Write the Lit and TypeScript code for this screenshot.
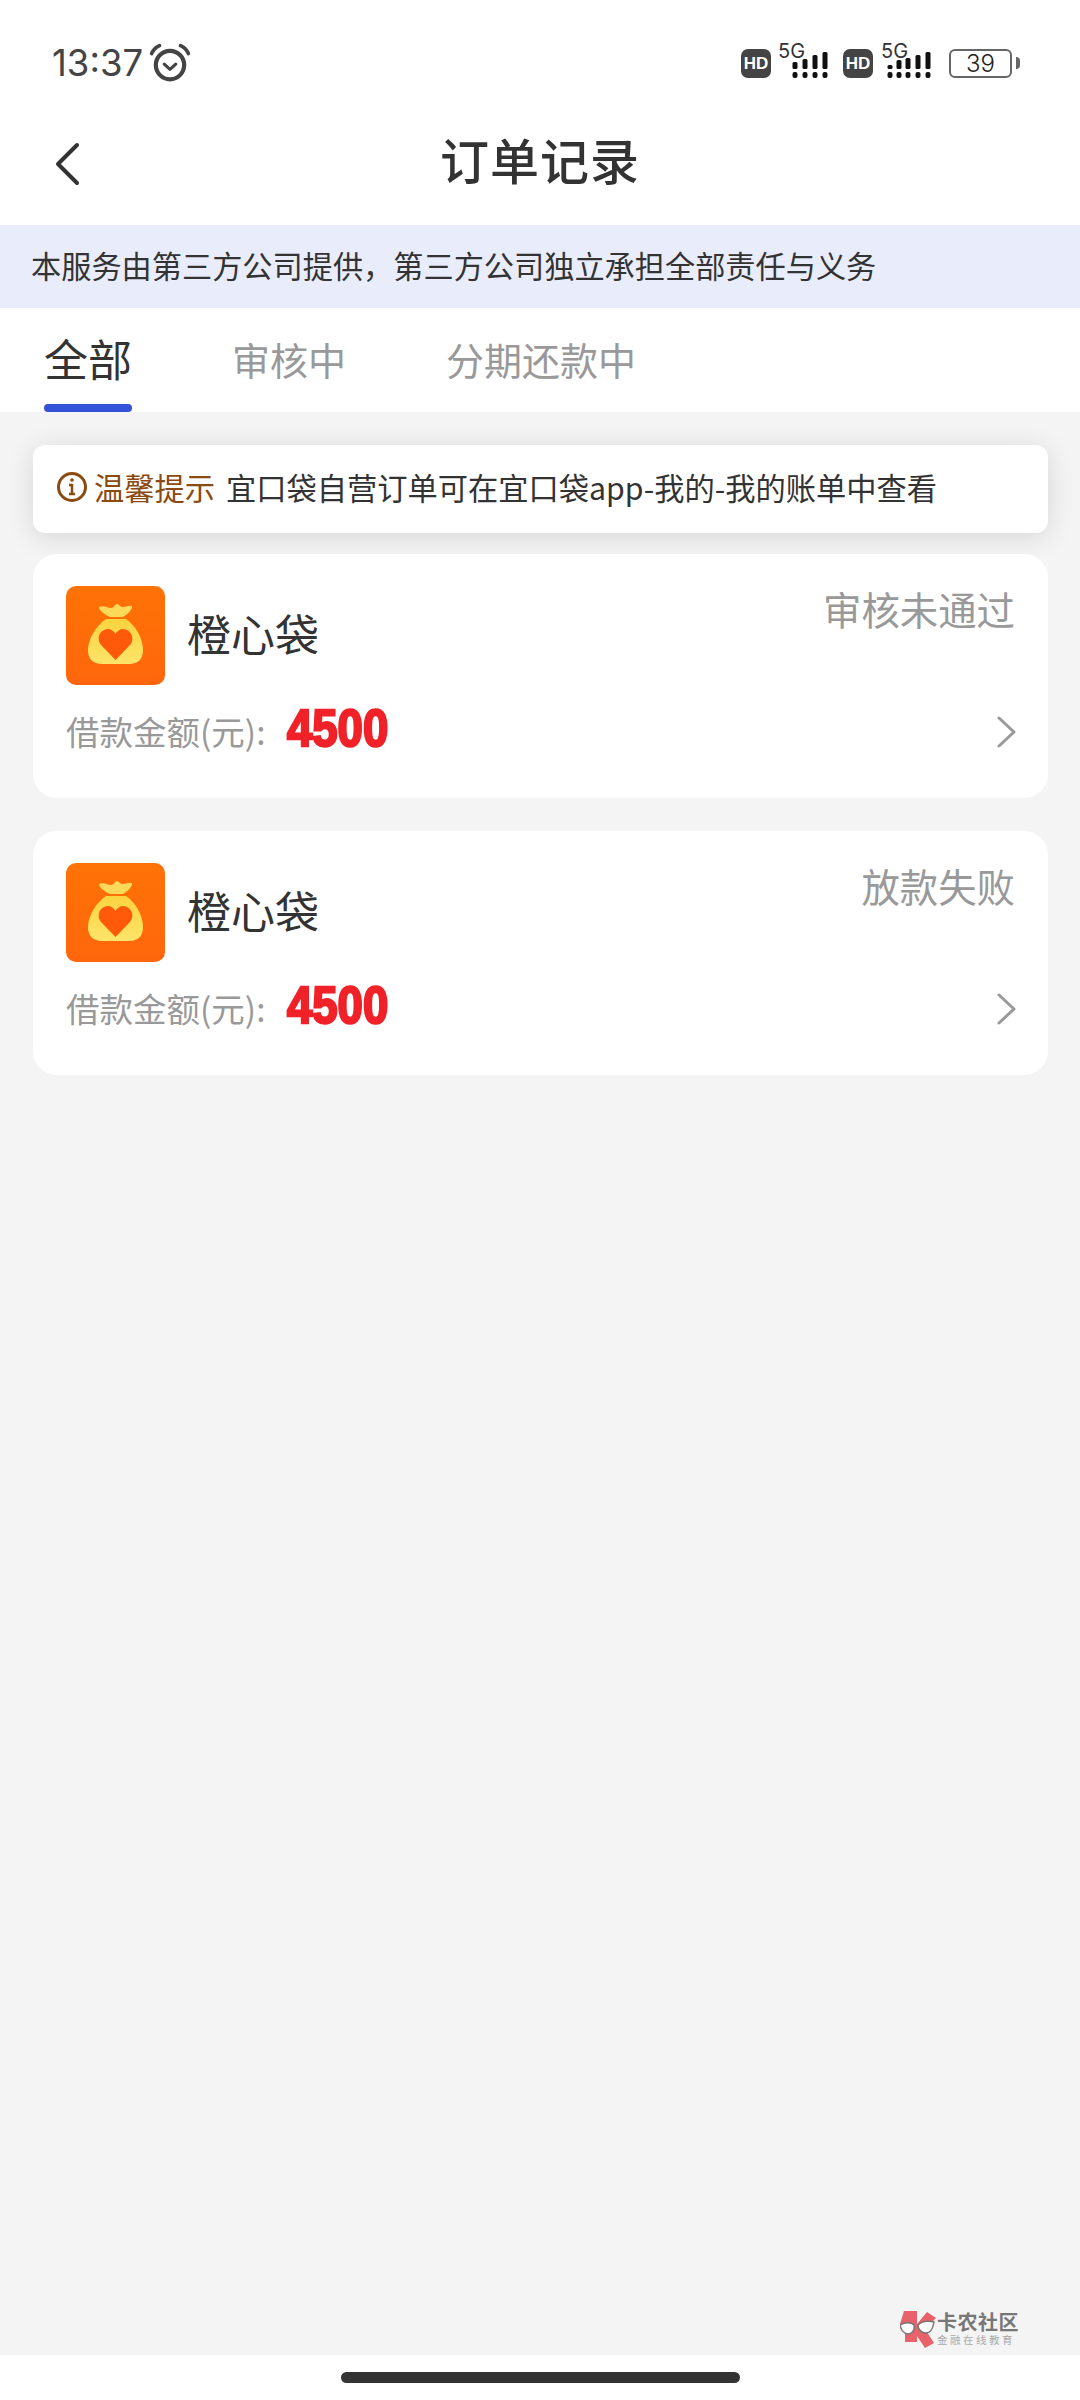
import { LitElement, html, css, svg } from 'lit';
import { customElement } from 'lit/decorators.js';

const orders = [
  { name: '橙心袋', status: '审核未通过', amount: '4500' },
  { name: '橙心袋', status: '放款失败', amount: '4500' },
];

const signal = (cols: number[], first: boolean) => svg`
  <svg class="signal" width=${first ? 36 : 44} height="27" viewBox="0 0 ${first ? 36 : 44} 27">
    ${cols.map((x, i) => {
      const tops = first ? [10, 7, 3, 0] : [13, 8, 6, 3, 0];
      return svg`
        <rect x=${x - 2.5} y=${tops[i]} width="5" height=${17 - tops[i]} rx="1.5" fill="#111" />
        <rect x=${x - 2.5} y="20" width="5" height="6" rx="2" fill="#111" />`;
    })}
  </svg>`;

@customElement('app-root')
export class AppRoot extends LitElement {
  static styles = css`
    :host {
      display: block;
      font-family: 'Noto Sans CJK SC', 'Noto Sans', sans-serif;
      color: #333;
    }
    .page {
      position: relative;
      display: flex;
      flex-direction: column;
      width: 1080px;
      height: 2400px;
      background: #f4f4f4;
      overflow: hidden;
    }

    /* Status bar */
    .status {
      display: flex;
      align-items: center;
      justify-content: space-between;
      height: 50px;
      padding: 38px 60px 0 52px;
      background: #fff;
    }
    .time {
      display: flex;
      align-items: center;
      gap: 6px;
      font-family: Inter, Roboto, sans-serif;
      font-size: 36.500px;
      line-height: 50px;
      color: #444;
    }
    .indicators {
      display: flex;
      align-items: center;
    }
    .hd {
      width: 30px;
      height: 29px;
      border-radius: 7px;
      background: #444;
      color: #fff;
      font: 700 17px/29px 'Liberation Sans', sans-serif;
      text-align: center;
    }
    .hd.next {
      margin-left: 15px;
    }
    .net {
      position: relative;
      display: flex;
      align-items: flex-end;
      height: 32px;
      margin-left: 21px;
    }
    .net.second {
      margin-left: 14px;
    }
    .net span {
      position: absolute;
      left: -14px;
      top: -7px;
      font: 400 20px/22px Inter, Roboto, sans-serif;
      color: #333;
    }
    .net.second span {
      left: -6px;
    }
    .battery {
      width: 63px;
      height: 29px;
      margin-left: 18px;
      box-sizing: border-box;
      border: 2px solid #666;
      border-radius: 6px;
      font: 300 24px/25px Inter, Roboto, sans-serif;
      text-align: center;
      color: #222;
    }
    .tip {
      width: 4px;
      height: 12px;
      margin-left: 4px;
      border-radius: 0 4px 4px 0;
      background: #666;
    }

    /* Navigation */
    .nav {
      position: relative;
      height: 137px;
      display: flex;
      align-items: center;
      justify-content: center;
      background: #fff;
    }
    .back {
      position: absolute;
      left: 54px;
      top: 54px;
    }
    .title {
      margin-top: 5px;
      font-size: 49px;
      font-weight: 500;
      line-height: 60px;
      letter-spacing: 1px;
    }
    .banner {
      height: 83px;
      padding-left: 31px;
      background: #e9ecfb;
      font-size: 30.200px;
      line-height: 81px;
      white-space: nowrap;
    }

    /* Tabs */
    .tabs {
      display: flex;
      height: 104px;
      padding-left: 44px;
      background: #fff;
    }
    .tab {
      position: relative;
      margin-right: 100px;
      font-size: 38px;
      line-height: 101px;
      color: #999;
    }
    .tab.active {
      font-size: 44px;
      color: #333;
    }
    .tab.active::after {
      content: '';
      position: absolute;
      left: 0;
      right: 0;
      bottom: 0;
      height: 8px;
      border-radius: 4px;
      background: #3452d8;
    }

    /* Content */
    .content {
      flex: 1;
      padding: 33px 32px 0 33px;
      display: flex;
      flex-direction: column;
    }
    .notice {
      display: flex;
      align-items: center;
      height: 88px;
      padding: 0 0 5px 23px;
      box-sizing: border-box;
      margin-bottom: 21px;
      border-radius: 12px;
      background: #fff;
      box-shadow: 0 4px 28px rgba(0, 0, 0, 0.12);
      font-size: 30.250px;
      white-space: nowrap;
    }
    .notice svg {
      margin-right: 6px;
    }
    .notice b {
      font-weight: 400;
      color: #8a4a10;
      margin-right: 11px;
    }
    .card {
      position: relative;
      height: 244.200px;
      margin-bottom: 33px;
      padding: 32px 33px 0;
      box-sizing: border-box;
      border-radius: 24px;
      background: #fff;
    }
    .head {
      display: flex;
      align-items: center;
      gap: 22px;
    }
    .head .name {
      flex: 1;
      margin-top: -5px;
      font-size: 44px;
      line-height: 60px;
    }
    .head .state {
      align-self: flex-start;
      margin-top: -6px;
      font-size: 38.400px;
      line-height: 56px;
      color: #999;
    }
    .row {
      display: flex;
      align-items: center;
      height: 60px;
      margin-top: 16px;
    }
    .label {
      margin-top: -2px;
      font-size: 33.500px;
      color: #999;
      white-space: nowrap;
    }
    .amount {
      display: inline-block;
      width: 102px;
      margin-left: 22px;
      margin-top: -6px;
      font: 700 52px/60px 'Liberation Sans', sans-serif;
      color: #f02128;
      -webkit-text-stroke: 2.500px #f02128;
      transform: scaleX(0.875);
      transform-origin: left center;
    }
    .chevron {
      margin-left: auto;
      margin-right: -2px;
      margin-top: 2px;
    }

    /* Watermark and home bar */
    .mark {
      position: absolute;
      left: 900px;
      top: 2310px;
      display: flex;
      align-items: center;
      gap: 1px;
    }
    .mark .words {
      display: flex;
      flex-direction: column;
      color: #777;
    }
    .mark .big {
      font-size: 20px;
      font-weight: 700;
      line-height: 22px;
      letter-spacing: 0.500px;
    }
    .mark .small {
      font-size: 10.500px;
      line-height: 14px;
      letter-spacing: 2.500px;
      color: #aaa;
    }
    .home {
      height: 45px;
      display: flex;
      align-items: flex-start;
      justify-content: center;
      background: #fff;
    }
    .home i {
      width: 399px;
      height: 11px;
      margin-top: 17px;
      border-radius: 6px;
      background: #333;
    }
  `;

  private bag() {
    return html`<svg width="99" height="99" viewBox="0 0 99 99">
      <defs>
        <linearGradient id="bagbg" x1="0" y1="0" x2="0" y2="1">
          <stop offset="0" stop-color="#ff7306" />
          <stop offset="1" stop-color="#ff660c" />
        </linearGradient>
        <linearGradient id="bagfill" x1="0" y1="0" x2="0" y2="1">
          <stop offset="0" stop-color="#fbd33f" />
          <stop offset="1" stop-color="#fee46a" />
        </linearGradient>
      </defs>
      <rect width="99" height="99" rx="10" fill="url(#bagbg)" />
      <path
        d="M33 21c4-2 8 1 12 1 3 0 4-4 6-4s3 3 5 3c3 0 8-2 10-1 1 3-5 9-9 11H44c-4-2-11-6-11-10z"
        fill="#fdd95a"
      />
      <path
        d="M40 33h20c9 6 17 19 17 31 0 9-5 14-14 14H36c-9 0-14-5-14-14 0-12 9-25 18-31z"
        fill="url(#bagfill)"
      />
      <path
        d="M49.500 74 36 60c-3-3-4-6-3-10 1-4 5-7 9-7 3 0 6 2 7.500 5 1.500-3 4.500-5 7.500-5 4 0 8 3 9 7 1 4 0 7-3 10z"
        fill="#ff5a0a"
      />
    </svg>`;
  }

  private statusBar() {
    return html`<div class="status">
      <div class="time">
        13:37
        <svg width="42" height="40" viewBox="0 0 40 38" fill="none" stroke="#444" stroke-linecap="round">
          <circle cx="20" cy="21" r="13.500" stroke-width="4" />
          <path d="M14.500 20l5.500 5 5.500-5" stroke-width="3" stroke-linejoin="round" />
          <path d="M2.500 10C4 6.500 6.500 4 10 2.500M37.500 10C36 6.500 33.500 4 30 2.500" stroke-width="3.500" />
        </svg>
      </div>
      <div class="indicators">
        <div class="hd">HD</div>
        <div class="net"><span>5G</span>${signal([3, 13, 23, 33], true)}</div>
        <div class="hd next">HD</div>
        <div class="net second"><span>5G</span>${signal([3, 12, 21, 31, 41], false)}</div>
        <div class="battery">39</div>
        <div class="tip"></div>
      </div>
    </div>`;
  }

  render() {
    return html`
      <div class="page">
        ${this.statusBar()}
        <div class="nav">
          <svg class="back" width="28" height="44" viewBox="0 0 28 44" fill="none" stroke="#333" stroke-width="4" stroke-linecap="round" stroke-linejoin="round">
            <path d="M23 3 4 22l19 19" />
          </svg>
          <div class="title">订单记录</div>
        </div>
        <div class="banner">本服务由第三方公司提供，第三方公司独立承担全部责任与义务</div>
        <div class="tabs">
          <div class="tab active">全部</div>
          <div class="tab">审核中</div>
          <div class="tab">分期还款中</div>
        </div>
        <div class="content">
          <div class="notice">
            <svg width="32" height="32" viewBox="0 0 32 32" fill="none" stroke="#8a4a10">
              <circle cx="16" cy="16" r="13.500" stroke-width="3" />
              <path d="M16 13v10M13 14h3M13 23h6" stroke-width="2.500" />
              <circle cx="16" cy="9" r="1.800" fill="#8a4a10" stroke="none" />
            </svg>
            <b>温馨提示</b>
            宜口袋自营订单可在宜口袋app-我的-我的账单中查看
          </div>
          ${orders.map(
            (o) => html`<div class="card">
              <div class="head">
                ${this.bag()}
                <div class="name">${o.name}</div>
                <div class="state">${o.status}</div>
              </div>
              <div class="row">
                <span class="label">借款金额(元):</span>
                <span class="amount">${o.amount}</span>
                <svg class="chevron" width="20" height="32" viewBox="0 0 20 32" fill="none" stroke="#999" stroke-width="3" stroke-linecap="round" stroke-linejoin="round">
                  <path d="M2 2l15 14L2 30" />
                </svg>
              </div>
            </div>`
          )}
        </div>
        <div class="mark">
          <svg width="36" height="38" viewBox="0 0 36 38">
            <path d="M4 1h13v13L27 2l9 6-11 11 9 14-9 5-8-12v6H5V22L0 14z" fill="#e8616b" />
            <path d="M0 15c5-3 11-3 14 0 1 5-2 9-6 9s-7-4-8-9zM18 15c4-4 11-4 16-3-1 6-3 11-8 11-4 0-8-3-8-8z" fill="#fff" stroke="#777" stroke-width="1.500" />
          </svg>
          <div class="words">
            <span class="big">卡农社区</span>
            <span class="small">金融在线教育</span>
          </div>
        </div>
        <div class="home"><i></i></div>
      </div>
    `;
  }
}
